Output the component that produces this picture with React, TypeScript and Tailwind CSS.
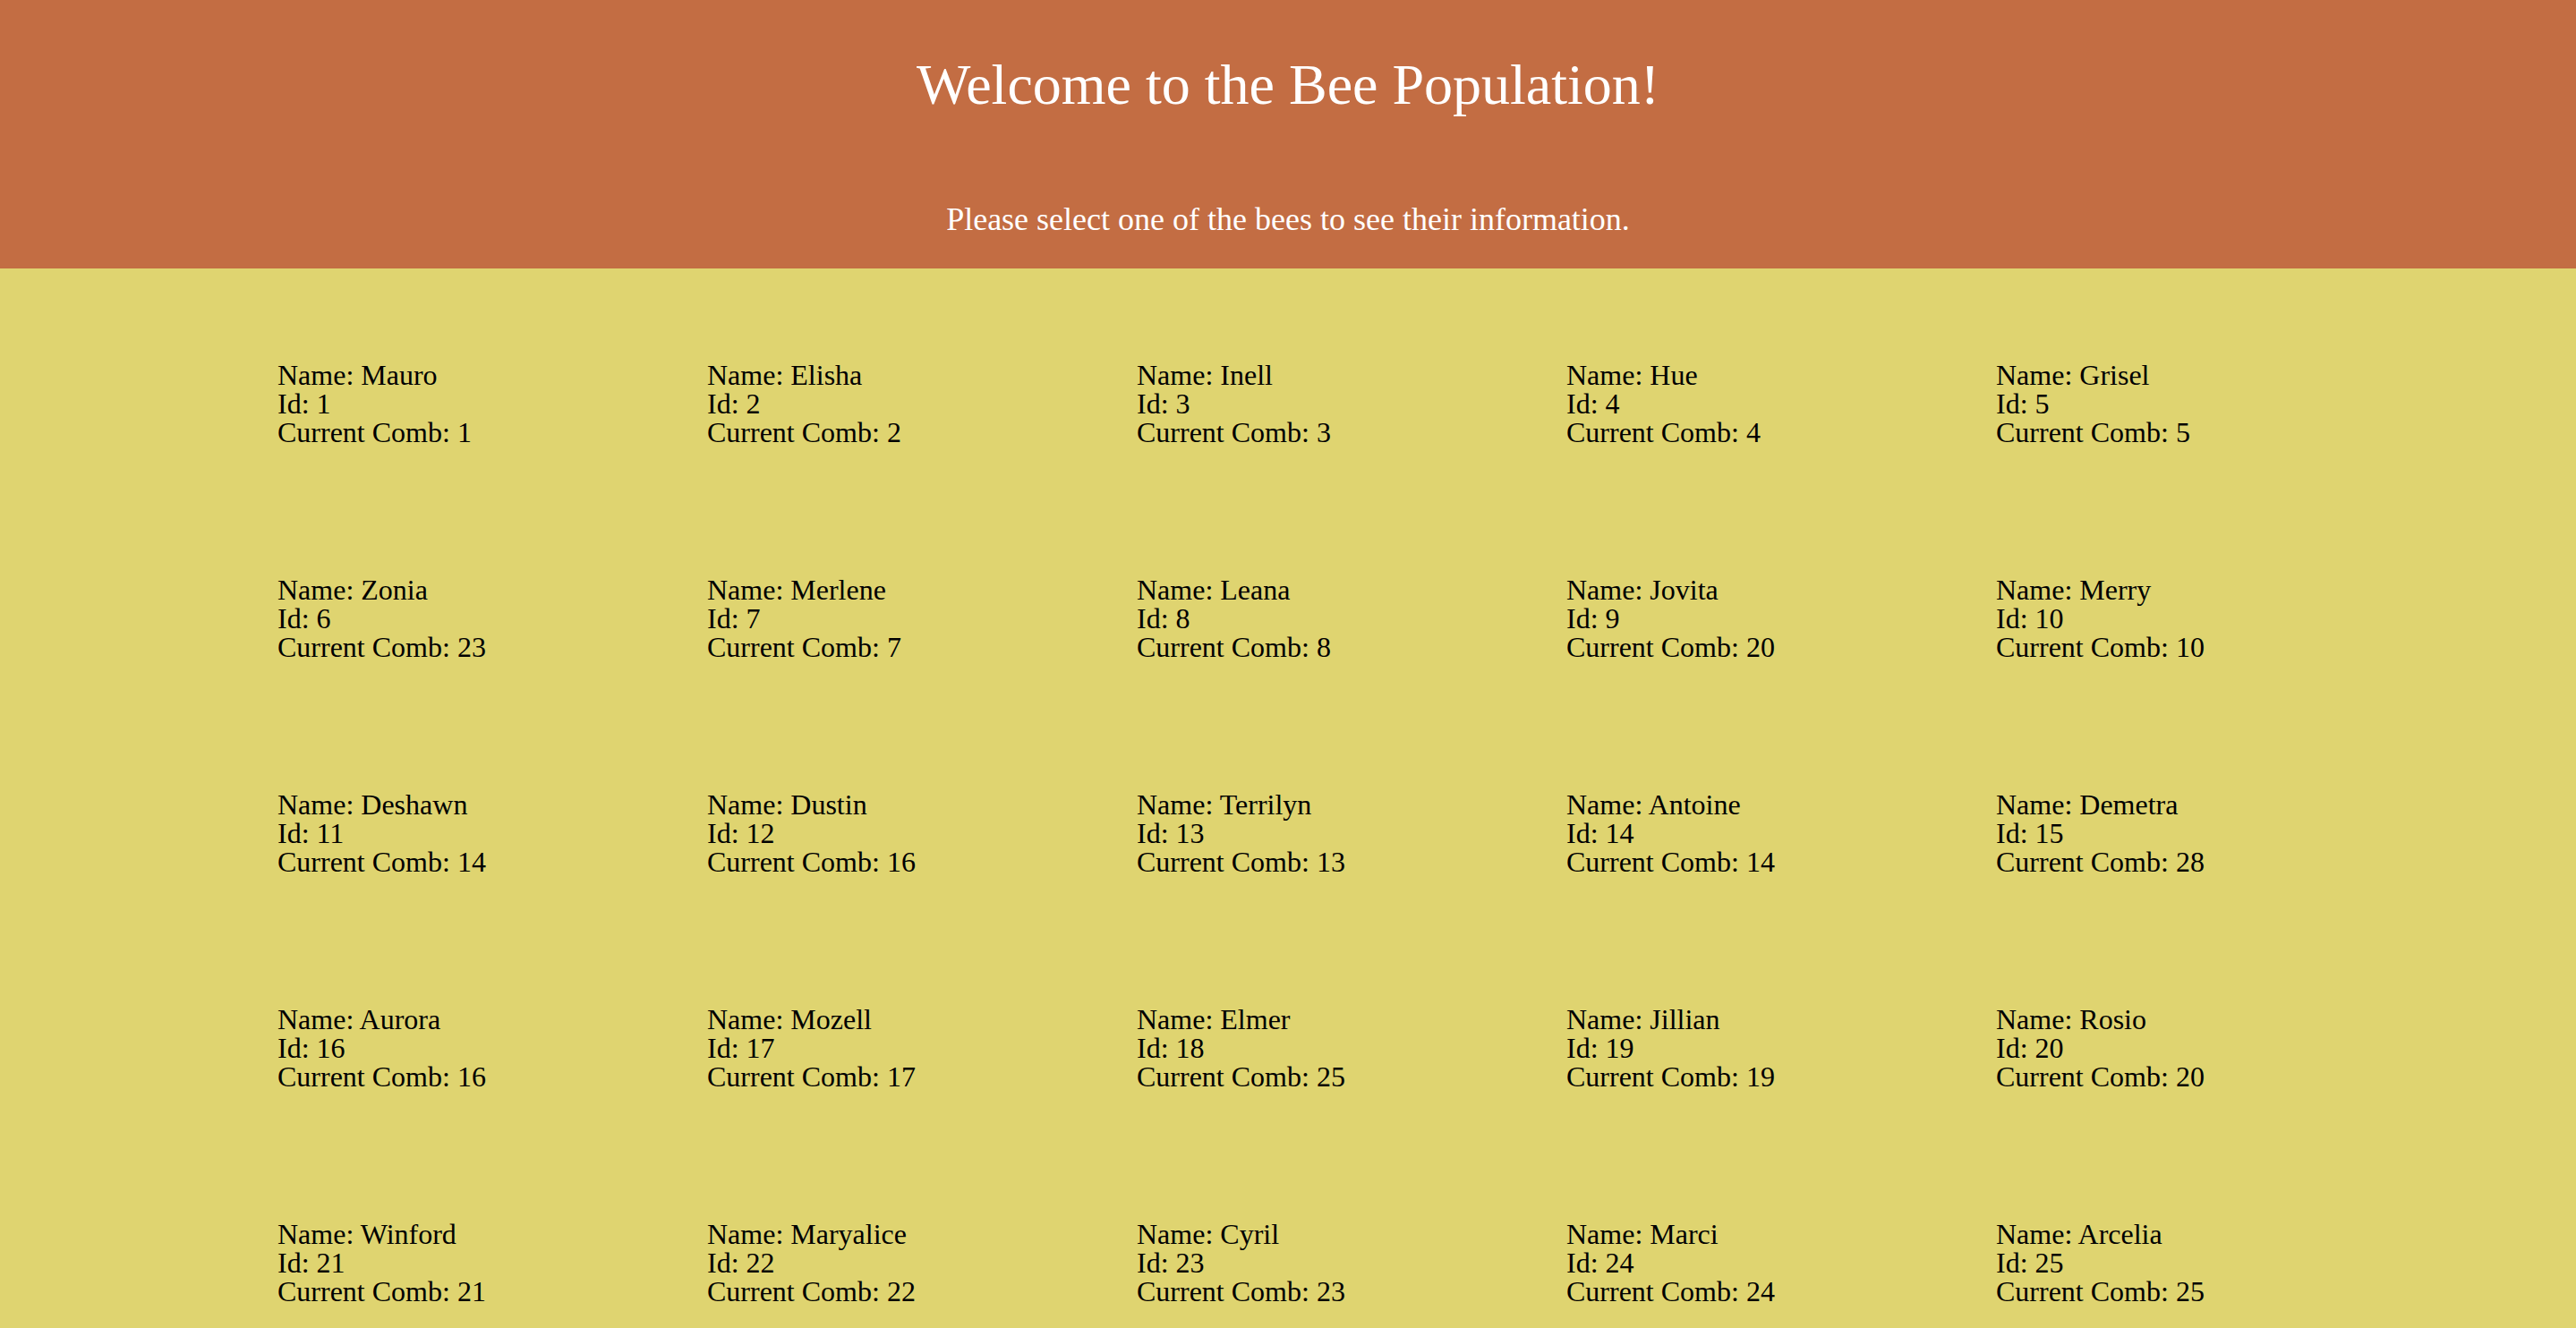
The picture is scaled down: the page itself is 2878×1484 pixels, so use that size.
const bees = [
  { name: "Mauro", id: 1, comb: 1 },
  { name: "Elisha", id: 2, comb: 2 },
  { name: "Inell", id: 3, comb: 3 },
  { name: "Hue", id: 4, comb: 4 },
  { name: "Grisel", id: 5, comb: 5 },
  { name: "Zonia", id: 6, comb: 23 },
  { name: "Merlene", id: 7, comb: 7 },
  { name: "Leana", id: 8, comb: 8 },
  { name: "Jovita", id: 9, comb: 20 },
  { name: "Merry", id: 10, comb: 10 },
  { name: "Deshawn", id: 11, comb: 14 },
  { name: "Dustin", id: 12, comb: 16 },
  { name: "Terrilyn", id: 13, comb: 13 },
  { name: "Antoine", id: 14, comb: 14 },
  { name: "Demetra", id: 15, comb: 28 },
  { name: "Aurora", id: 16, comb: 16 },
  { name: "Mozell", id: 17, comb: 17 },
  { name: "Elmer", id: 18, comb: 25 },
  { name: "Jillian", id: 19, comb: 19 },
  { name: "Rosio", id: 20, comb: 20 },
  { name: "Winford", id: 21, comb: 21 },
  { name: "Maryalice", id: 22, comb: 22 },
  { name: "Cyril", id: 23, comb: 23 },
  { name: "Marci", id: 24, comb: 24 },
  { name: "Arcelia", id: 25, comb: 25 },
];

export default function App() {
  return (
    <div className="min-h-screen bg-[#dfd470] font-['Liberation_Serif','Times_New_Roman',serif]">
      <header className="h-[300px] bg-[#c36d43] text-white text-center pt-[63px]">
        <h1 className="text-[64px] leading-[64px]">Welcome to the Bee Population!</h1>
        <p className="text-[36px] leading-[36px] mt-[100px]">
          Please select one of the bees to see their information.
        </p>
      </header>

      <div className="grid grid-cols-[repeat(5,480px)] gap-y-[144px] pl-[310px] pt-[103px] pb-[25px] text-black">
        {bees.map((bee) => (
          <div key={bee.id} className="text-[32px] leading-[32px] cursor-pointer">
            <div>Name: {bee.name}</div>
            <div>Id: {bee.id}</div>
            <div>Current Comb: {bee.comb}</div>
          </div>
        ))}
      </div>
    </div>
  );
}
